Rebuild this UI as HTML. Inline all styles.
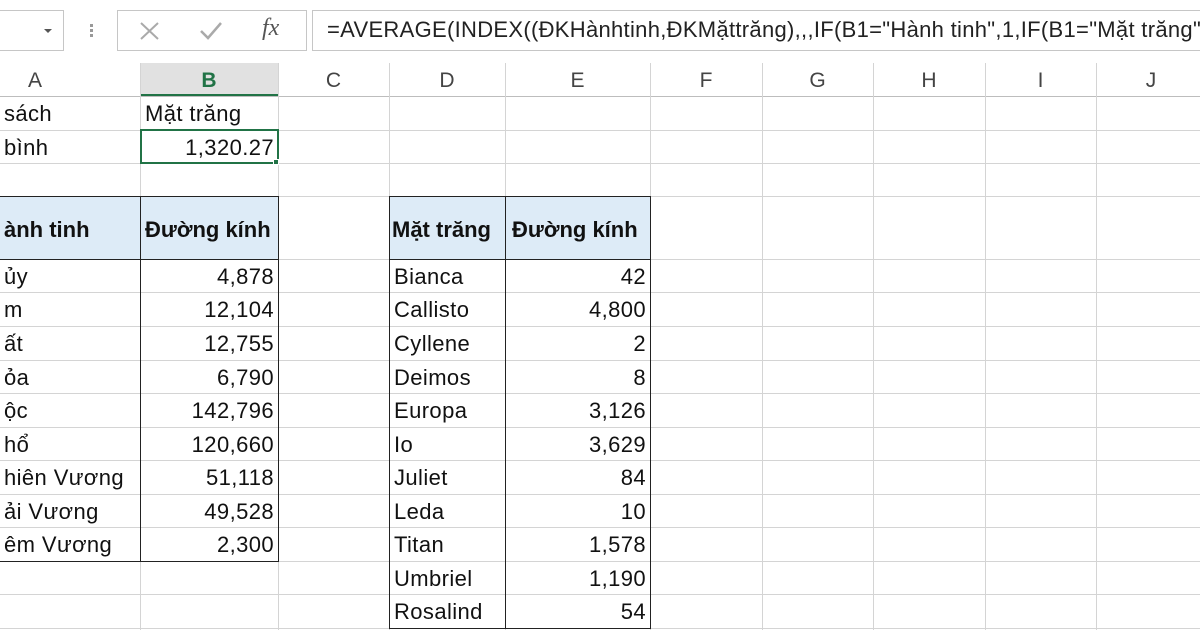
<!DOCTYPE html>
<html><head><meta charset="utf-8"><style>
*{margin:0;padding:0;box-sizing:border-box}
body{width:1200px;height:630px;overflow:hidden;background:#fff;position:relative;font-family:"Liberation Sans","DejaVu Sans",sans-serif;color:#000}
.a{position:absolute}
.vl{position:absolute;top:63px;height:567px;width:1px;background:#d4d4d4}
.hl{position:absolute;left:0;width:1200px;height:1px;background:#d4d4d4}
.h{position:absolute;top:63px;height:33px;font-size:21px;color:#444;text-align:center;line-height:35px}
.c{position:absolute;font-size:22px;letter-spacing:0.4px;height:33px;line-height:35px;white-space:nowrap;overflow:hidden;padding:0 4px;color:#111}
.r{text-align:right;padding-right:3px}
.b{font-weight:bold;letter-spacing:0}
</style></head><body>
<!-- formula bar -->
<div class="a" style="left:-2px;top:10px;width:66px;height:41px;border:1px solid #c6c6c6"></div>
<div class="a" style="left:44px;top:29px;width:0;height:0;border-left:4px solid transparent;border-right:4px solid transparent;border-top:4px solid #555"></div>
<div class="a" style="left:90px;top:24px;width:3px;height:3px;background:#999;box-shadow:0 5px 0 #999,0 10px 0 #999"></div>
<div class="a" style="left:117px;top:10px;width:190px;height:41px;border:1px solid #c6c6c6"></div>
<svg class="a" style="left:138px;top:20px" width="24" height="22"><path d="M3 3L20 19M20 3L3 19" stroke="#aaa" stroke-width="2" fill="none"/></svg>
<svg class="a" style="left:198px;top:20px" width="26" height="22"><path d="M3 11L10 18L23 3" stroke="#aaa" stroke-width="2.5" fill="none"/></svg>
<div class="a" style="left:262px;top:15px;font-family:'Liberation Serif',serif;font-style:italic;font-size:24px;color:#555">fx</div>
<div class="a" style="left:312px;top:10px;width:900px;height:41px;border:1px solid #c6c6c6"></div>
<div class="a" style="left:327px;top:17px;font-size:22px;letter-spacing:0.3px;white-space:nowrap;color:#222">=AVERAGE(INDEX((ĐKHànhtinh,ĐKMặttrăng),,,IF(B1="Hành tinh",1,IF(B1="Mặt trăng",2)))))</div>
<!-- header -->
<div class="a" style="left:140px;top:63px;width:138px;height:33px;background:#e1e1e1;border-bottom:2px solid #217346"></div>
<div class="hl" style="top:96px;background:#bdbdbd"></div>
<div class="h" style="left:-35px;width:140px">A</div>
<div class="h" style="left:140px;width:138px;color:#217346;font-weight:bold">B</div>
<div class="h" style="left:278px;width:111px">C</div>
<div class="h" style="left:389px;width:116px">D</div>
<div class="h" style="left:505px;width:145px">E</div>
<div class="h" style="left:650px;width:112px">F</div>
<div class="h" style="left:762px;width:111px">G</div>
<div class="h" style="left:873px;width:112px">H</div>
<div class="h" style="left:985px;width:111px">I</div>
<div class="h" style="left:1096px;width:110px">J</div>
<!-- gridlines -->
<div class="vl" style="left:140px"></div><div class="vl" style="left:278px"></div><div class="vl" style="left:389px"></div><div class="vl" style="left:505px"></div><div class="vl" style="left:650px"></div><div class="vl" style="left:762px"></div><div class="vl" style="left:873px"></div><div class="vl" style="left:985px"></div><div class="vl" style="left:1096px"></div>
<div class="hl" style="top:130px"></div><div class="hl" style="top:163px"></div><div class="hl" style="top:196px"></div><div class="hl" style="top:259px"></div>
<div class="hl" style="top:292px"></div><div class="hl" style="top:326px"></div><div class="hl" style="top:360px"></div><div class="hl" style="top:393px"></div><div class="hl" style="top:427px"></div><div class="hl" style="top:460px"></div><div class="hl" style="top:494px"></div><div class="hl" style="top:527px"></div><div class="hl" style="top:561px"></div><div class="hl" style="top:594px"></div><div class="hl" style="top:628px"></div>
<!-- header fills -->
<div class="a" style="left:0;top:196px;width:278px;height:63px;background:#ddebf7"></div>
<div class="a" style="left:389px;top:196px;width:261px;height:63px;background:#ddebf7"></div>
<!-- table borders -->
<div class="a" style="left:-2px;top:196px;width:281px;height:366px;border:1px solid #222"></div>
<div class="a" style="left:140px;top:196px;width:1px;height:366px;background:#222"></div>
<div class="a" style="left:-2px;top:259px;width:280px;height:1px;background:#222"></div>
<div class="a" style="left:389px;top:196px;width:262px;height:433px;border:1px solid #222"></div>
<div class="a" style="left:505px;top:196px;width:1px;height:433px;background:#222"></div>
<div class="a" style="left:389px;top:259px;width:262px;height:1px;background:#222"></div>
<!-- rows 1-2 -->
<div class="c" style="left:0;top:96px">sách</div>
<div class="c" style="left:141px;top:96px">Mặt trăng</div>
<div class="c" style="left:0;top:130px">bình</div>
<div class="a" style="left:140px;top:129px;width:139px;height:35px;border:2px solid #217346"></div>
<div class="a" style="left:273px;top:159px;width:6px;height:6px;background:#217346;border:1px solid #fff"></div>
<div class="c r" style="left:140px;top:130px;width:137px">1,320.27</div>
<div class="c b" style="left:0;top:212px">ành tinh</div>
<div class="c b" style="left:141px;top:212px">Đường kính</div>
<div class="c b" style="left:390px;top:212px;padding:0 2px">Mặt trăng</div>
<div class="c b" style="left:508px;top:212px">Đường kính</div>
<!-- A/B data -->
<div class="c" style="left:0;top:259px">ủy</div><div class="c r" style="left:140px;width:137px;top:259px">4,878</div>
<div class="c" style="left:0;top:292px">m</div><div class="c r" style="left:140px;width:137px;top:292px">12,104</div>
<div class="c" style="left:0;top:326px">ất</div><div class="c r" style="left:140px;width:137px;top:326px">12,755</div>
<div class="c" style="left:0;top:360px">ỏa</div><div class="c r" style="left:140px;width:137px;top:360px">6,790</div>
<div class="c" style="left:0;top:393px">ộc</div><div class="c r" style="left:140px;width:137px;top:393px">142,796</div>
<div class="c" style="left:0;top:427px">hổ</div><div class="c r" style="left:140px;width:137px;top:427px">120,660</div>
<div class="c" style="left:0;top:460px">hiên Vương</div><div class="c r" style="left:140px;width:137px;top:460px">51,118</div>
<div class="c" style="left:0;top:494px">ải Vương</div><div class="c r" style="left:140px;width:137px;top:494px">49,528</div>
<div class="c" style="left:0;top:527px">êm Vương</div><div class="c r" style="left:140px;width:137px;top:527px">2,300</div>
<!-- D/E data -->
<div class="c" style="left:390px;top:259px">Bianca</div><div class="c r" style="left:505px;width:144px;top:259px">42</div>
<div class="c" style="left:390px;top:292px">Callisto</div><div class="c r" style="left:505px;width:144px;top:292px">4,800</div>
<div class="c" style="left:390px;top:326px">Cyllene</div><div class="c r" style="left:505px;width:144px;top:326px">2</div>
<div class="c" style="left:390px;top:360px">Deimos</div><div class="c r" style="left:505px;width:144px;top:360px">8</div>
<div class="c" style="left:390px;top:393px">Europa</div><div class="c r" style="left:505px;width:144px;top:393px">3,126</div>
<div class="c" style="left:390px;top:427px">Io</div><div class="c r" style="left:505px;width:144px;top:427px">3,629</div>
<div class="c" style="left:390px;top:460px">Juliet</div><div class="c r" style="left:505px;width:144px;top:460px">84</div>
<div class="c" style="left:390px;top:494px">Leda</div><div class="c r" style="left:505px;width:144px;top:494px">10</div>
<div class="c" style="left:390px;top:527px">Titan</div><div class="c r" style="left:505px;width:144px;top:527px">1,578</div>
<div class="c" style="left:390px;top:561px">Umbriel</div><div class="c r" style="left:505px;width:144px;top:561px">1,190</div>
<div class="c" style="left:390px;top:594px">Rosalind</div><div class="c r" style="left:505px;width:144px;top:594px">54</div>
</body></html>
